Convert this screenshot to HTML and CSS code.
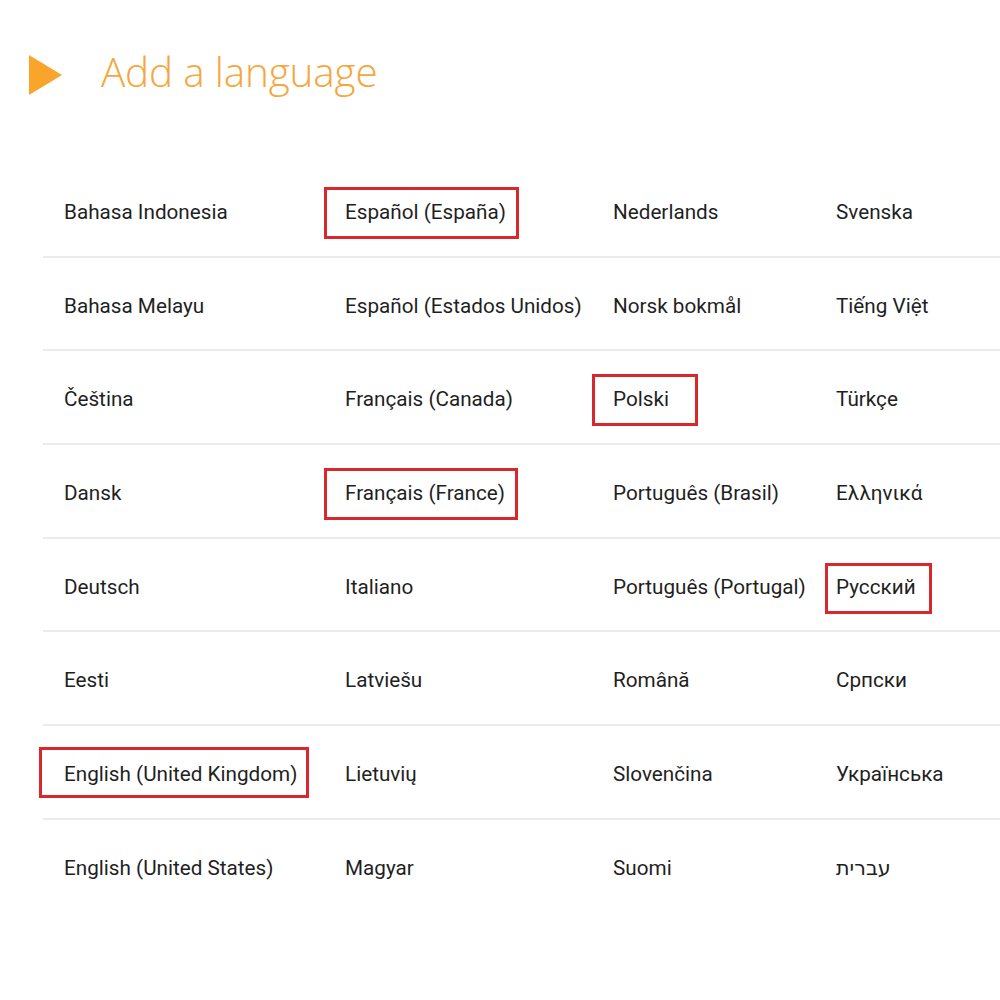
FILE: index.html
```html
<!DOCTYPE html>
<html lang="en">
<head>
<meta charset="utf-8">
<title>Add a language</title>
<link rel="stylesheet" href="styles.css">
</head>
<body>
<header class="head">
  <svg class="arrow" width="33" height="40" viewBox="0 0 33 40"><polygon points="0,0 33,20 0,40" fill="#f9a52c"/></svg>
  <h1 class="title">Add a language</h1>
</header>
<main class="langs">
  <div class="cell">Bahasa Indonesia</div>
  <div class="cell"><span class="mark">Español (España)</span></div>
  <div class="cell">Nederlands</div>
  <div class="cell">Svenska</div>

  <div class="cell">Bahasa Melayu</div>
  <div class="cell">Español (Estados Unidos)</div>
  <div class="cell">Norsk bokmål</div>
  <div class="cell">Tiếng Việt</div>

  <div class="cell">Čeština</div>
  <div class="cell">Français (Canada)</div>
  <div class="cell"><span class="mark mark-roomy">Polski</span></div>
  <div class="cell">Türkçe</div>

  <div class="cell">Dansk</div>
  <div class="cell"><span class="mark">Français (France)</span></div>
  <div class="cell">Português (Brasil)</div>
  <div class="cell">Ελληνικά</div>

  <div class="cell">Deutsch</div>
  <div class="cell">Italiano</div>
  <div class="cell">Português (Portugal)</div>
  <div class="cell"><span class="mark mark-tight">Русский</span></div>

  <div class="cell">Eesti</div>
  <div class="cell">Latviešu</div>
  <div class="cell">Română</div>
  <div class="cell">Српски</div>

  <div class="cell"><span class="mark mark-wide">English (United Kingdom)</span></div>
  <div class="cell">Lietuvių</div>
  <div class="cell">Slovenčina</div>
  <div class="cell">Українська</div>

  <div class="cell last">English (United States)</div>
  <div class="cell last">Magyar</div>
  <div class="cell last">Suomi</div>
  <div class="cell last">עברית</div>
</main>
</body>
</html>
```
FILE: styles.css
```css
html, body {
  margin: 0;
  padding: 0;
  background: #ffffff;
}

body {
  font-family: Roboto, "Noto Sans", "DejaVu Sans", sans-serif;
  color: #1f1f1f;
  overflow: hidden;
}

.head {
  display: flex;
  align-items: center;
  padding: 54px 0 0 29px;
  height: 41px;
}

.arrow {
  display: block;
  flex: none;
}

.title {
  margin: 0 0 0 39px;
  font-family: "Open Sans", "Segoe UI", sans-serif;
  font-weight: 300;
  font-size: 40.5px;
  line-height: 40px;
  color: #f6a63d;
  letter-spacing: -0.2px;
  position: relative;
  top: -3px;
}

.langs {
  display: grid;
  grid-template-columns: 281px 268px 223px 1fr;
  grid-auto-rows: 93.7px;
  margin: 69px 0 0 43px;
}

.cell {
  display: flex;
  align-items: center;
  padding-left: 21px;
  font-size: 20.7px;
  line-height: 24px;
  border-bottom: 2px solid #ebebeb;
  box-sizing: border-box;
  padding-top: 4px;
  white-space: nowrap;
}

.cell.last {
  border-bottom: none;
  padding-top: 2px;
  padding-bottom: 0;
}

.mark {
  position: relative;
}

/* red highlight frame around selected entries */
.mark::after {
  content: "";
  position: absolute;
  left: -21px;
  right: -13px;
  top: -13px;
  bottom: -15px;
  border: 3px solid #d8282d;
}

.mark-roomy::after {
  right: -29px;
}

.mark-tight::after {
  left: -11px;
  right: -16px;
  top: -12px;
  bottom: -15px;
}

.mark-wide::after {
  left: -25px;
  right: -12px;
  top: -15px;
  bottom: -12px;
}
```
